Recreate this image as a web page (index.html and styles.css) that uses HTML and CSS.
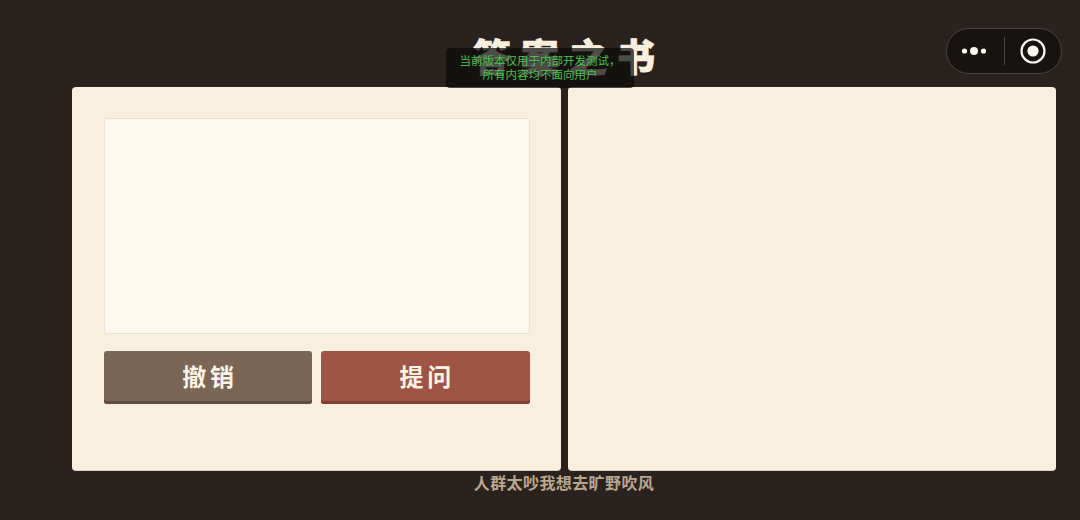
FILE: index.html
```html
<!DOCTYPE html>
<html lang="zh-CN">
<head>
  <meta charset="UTF-8" />
  <meta name="viewport" content="width=device-width, initial-scale=1.0"/>
  <title>答案之书</title>
  <link rel="stylesheet" href="styles.css">
</head>
<body>
  <div class="page">
    <h1 class="title">答案之书</h1>

    <div class="book">
      <section class="card card-left">
        <div class="input-box"></div>
        <div class="btn-row">
          <button class="btn btn-undo">撤销</button>
          <button class="btn btn-ask">提问</button>
        </div>
      </section>
      <section class="card"></section>
    </div>

    <p class="slogan">人群太吵我想去旷野吹风</p>
  </div>

  <!-- 开发版提示 -->
  <div class="dev-toast">当前版本仅用于内部开发测试，<br>所有内容均不面向用户</div>

  <!-- 小程序胶囊 -->
  <div class="capsule">
    <div class="capsule-more">
      <svg width="32" height="12" viewBox="0 0 32 12">
        <circle cx="5.5" cy="6" r="2.6" fill="#fbf6ee"/>
        <circle cx="15" cy="6" r="4" fill="#fbf6ee"/>
        <circle cx="24.5" cy="6" r="2.6" fill="#fbf6ee"/>
      </svg>
    </div>
    <div class="capsule-line"></div>
    <div class="capsule-home">
      <svg width="28" height="28" viewBox="0 0 28 28">
        <circle cx="14" cy="14" r="11.5" fill="none" stroke="#fbf6ee" stroke-width="2.2"/>
        <circle cx="14" cy="14" r="5.6" fill="#fbf6ee"/>
      </svg>
    </div>
  </div>
</body>
</html>
```

FILE: styles.css
```css
* {
  box-sizing: border-box;
}

body {
  margin: 0;
  width: 1080px;
  height: 520px;
  overflow: hidden;
  background-color: #2a221e;
  font-family: "Liberation Sans", "Noto Sans CJK SC", sans-serif;
}

.page {
  padding: 0 24px 0 72px;
}

.title {
  margin: 0;
  height: 87px;
  padding-top: 35px;
  text-align: center;
  font-size: 38px;
  line-height: 46px;
  font-weight: 900;
  letter-spacing: 10px;
  text-indent: 10px;
  color: #f8efe0;
  -webkit-text-stroke: 0.6px #f8efe0;
}

.book {
  display: grid;
  grid-template-columns: 1fr 1fr;
  gap: 7px;
  height: 383px;
}

.card {
  background: #f8efdf;
  border-radius: 4px;
  box-shadow: 0 1px 0 #d9cfbd;
}

.card-left {
  padding: 31px 31px 0 32px;
}

.input-box {
  height: 216px;
  background: #fef8ee;
  border: 1px solid #ebe1cd;
  border-radius: 3px;
}

.btn-row {
  display: grid;
  grid-template-columns: 1fr 1fr;
  gap: 9px;
  margin-top: 17px;
}

.btn {
  height: 53px;
  padding: 0 0 5px;
  border: none;
  border-radius: 3px;
  color: #fbf3e6;
  font-family: inherit;
  font-size: 24px;
  font-weight: 700;
  letter-spacing: 4px;
  text-indent: 4px;
}

.btn-undo {
  background: #7a6654;
  box-shadow: inset 0 -3px 0 #5f4c3d;
}

.btn-ask {
  background: #9e5545;
  box-shadow: inset 0 -3px 0 #823f31;
}

.slogan {
  margin: 4px 0 0;
  text-align: center;
  font-size: 16px;
  line-height: 20px;
  font-weight: 700;
  letter-spacing: 0.4px;
  color: #b8a78e;
}

.dev-toast {
  position: absolute;
  left: 446px;
  top: 48px;
  width: 188px;
  height: 40px;
  padding-top: 6px;
  background: rgba(12, 12, 10, 0.72);
  border-radius: 4px;
  text-align: center;
  font-size: 11.5px;
  line-height: 14px;
  color: #4cc052;
}

.capsule {
  position: absolute;
  left: 946px;
  top: 28px;
  width: 116px;
  height: 46px;
  display: flex;
  align-items: center;
  background: #171311;
  border: 1px solid #4a4340;
  border-radius: 23px;
}

.capsule-more,
.capsule-home {
  flex: 1;
  display: flex;
  justify-content: center;
  align-items: center;
}

.capsule-line {
  width: 1px;
  height: 28px;
  background: #4a4340;
}
```
